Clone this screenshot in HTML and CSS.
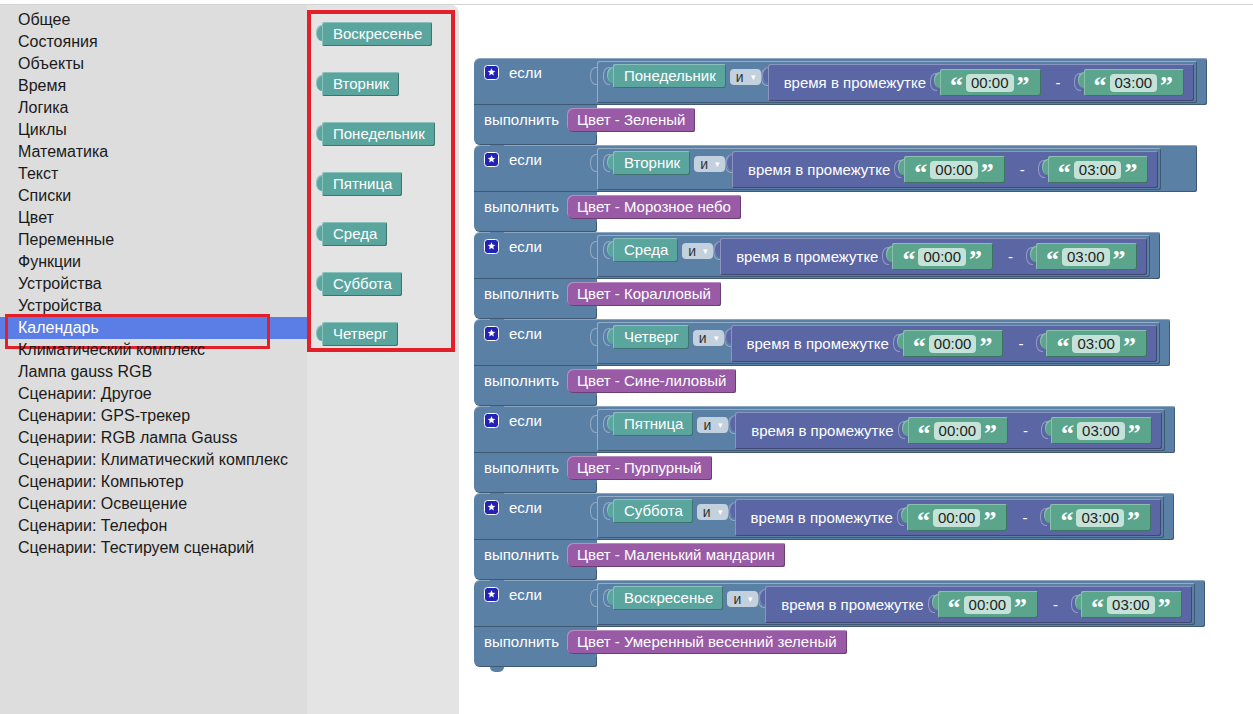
FILE: index.html
```html
<!DOCTYPE html>
<html>
<head>
  <meta charset="UTF-8">
  <title>Календарь - Blockly</title>
  <link rel="stylesheet" href="styles.css">
</head>
<body>
  <div class="app">
    <div class="toolbox">
      <div class="cat">Общее</div>
      <div class="cat">Состояния</div>
      <div class="cat">Объекты</div>
      <div class="cat">Время</div>
      <div class="cat">Логика</div>
      <div class="cat">Циклы</div>
      <div class="cat">Математика</div>
      <div class="cat">Текст</div>
      <div class="cat">Списки</div>
      <div class="cat">Цвет</div>
      <div class="cat">Переменные</div>
      <div class="cat">Функции</div>
      <div class="cat">Устройства</div>
      <div class="cat">Устройства</div>
      <div class="cat selected">Календарь</div>
      <div class="cat">Климатический комплекс</div>
      <div class="cat">Лампа gauss RGB</div>
      <div class="cat">Сценарии: Другое</div>
      <div class="cat">Сценарии: GPS-трекер</div>
      <div class="cat">Сценарии: RGB лампа Gauss</div>
      <div class="cat">Сценарии: Климатический комплекс</div>
      <div class="cat">Сценарии: Компьютер</div>
      <div class="cat">Сценарии: Освещение</div>
      <div class="cat">Сценарии: Телефон</div>
      <div class="cat">Сценарии: Тестируем сценарий</div>
    </div>

    <div class="flyout">
      <div class="flyout-list">
        <div class="day-block">Воскресенье</div>
        <div class="day-block">Вторник</div>
        <div class="day-block">Понедельник</div>
        <div class="day-block">Пятница</div>
        <div class="day-block">Среда</div>
        <div class="day-block">Суббота</div>
        <div class="day-block">Четверг</div>
      </div>
    </div>

    <div class="workspace" id="workspace"></div>
  </div>

  <script>
    // calendar rules: day of week + colour to apply from 00:00 to 03:00
    const rules = [
      ['Понедельник', 'Цвет - Зеленый'],
      ['Вторник', 'Цвет - Морозное небо', 'wide'],
      ['Среда', 'Цвет - Коралловый'],
      ['Четверг', 'Цвет - Сине-лиловый'],
      ['Пятница', 'Цвет - Пурпурный'],
      ['Суббота', 'Цвет - Маленький мандарин'],
      ['Воскресенье', 'Цвет - Умеренный весенний зеленый']
    ];
    const star = '<svg class="star" width="15" height="15" viewBox="0 0 15 15">' +
      '<rect x="0.5" y="0.5" width="14" height="14" rx="3" fill="#2222b4" stroke="#fff"/>' +
      '<path d="M7.5 3.3l1.1 2.5 2.7.2-2.1 1.8.7 2.6-2.4-1.4-2.4 1.4.7-2.6-2.1-1.8 2.7-.2z" fill="#fff"/></svg>';
    const textBlock = (t) =>
      '<div class="slot"><div class="text-block"><span class="q">\u201C</span>' +
      '<span class="field">' + t + '</span><span class="q">\u201D</span></div></div>';

    const ws = document.getElementById('workspace');
    rules.forEach(([day, colour, mod]) => {
      const el = document.createElement('div');
      el.className = 'if-block' + (mod ? ' ' + mod : '');
      el.innerHTML =
        '<div class="if-head">' +
          '<div class="if-label">' + star + '<span>если</span></div>' +
          '<div class="slot head-slot"><div class="and-block">' +
            '<div class="slot day-slot"><div class="day-block">' + day + '</div></div>' +
            '<div class="dropdown">и<span class="arrow">\u25BE</span></div>' +
            '<div class="slot range-slot"><div class="range-block">' +
              '<span class="range-label">время в промежутке</span>' +
              textBlock('00:00') + '<span class="dash">-</span>' + textBlock('03:00') +
            '</div></div>' +
          '</div></div>' +
        '</div>' +
        '<div class="if-body">' +
          '<div class="do-label">выполнить</div>' +
          '<div class="color-block">' + colour + '</div>' +
        '</div>' +
        '<div class="if-foot"></div>';
      ws.appendChild(el);
    });
  </script>
</body>
</html>
```

FILE: styles.css
```css
* {
  box-sizing: border-box;
}
html, body {
  margin: 0;
  padding: 0;
  height: 100%;
}
body {
  font-family: "Liberation Sans", Arial, sans-serif;
  background: #fff;
  overflow: hidden;
}
.app {
  display: flex;
  margin-top: 4px;
  border-top: 1px solid #d4d4d4;
  height: calc(100% - 4px);
}

/* category list */
.toolbox {
  width: 307px;
  flex-shrink: 0;
  background: #dddddd;
  padding-top: 4px;
}
.cat {
  position: relative;
  height: 22px;
  line-height: 22px;
  padding-left: 18px;
  font-size: 16px;
  color: #1a1a1a;
  white-space: nowrap;
}
.cat.selected {
  background: #5a7ee6;
  color: #fff;
}
.cat.selected::after {
  content: "";
  position: absolute;
  left: 5px;
  top: -3px;
  width: 259px;
  height: 29px;
  border: 3px solid #e3202a;
}

/* flyout with day blocks */
.flyout {
  width: 152px;
  flex-shrink: 0;
  background: #e4e4e4;
  border-top-right-radius: 8px;
}
.flyout-list {
  margin: 5px 4px 0 0;
  border: 4px solid #e3202a;
  padding: 8px 0 2px 11px;
  display: flex;
  flex-direction: column;
  align-items: flex-start;
  gap: 26px;
}

/* blocks */
.day-block,
.text-block,
.range-block {
  position: relative;
}
.day-block::before,
.text-block::before,
.range-block::before {
  content: "";
  position: absolute;
  left: -6px;
  top: 3px;
  width: 6px;
  height: 16px;
  background: inherit;
  border-radius: 6px 0 0 6px / 8px 0 0 8px;
  box-shadow: inset 1px 1px 0 rgba(255, 255, 255, 0.3);
}
.day-block {
  height: 24px;
  line-height: 24px;
  padding: 0 10px 0 11px;
  font-size: 15px;
  color: #fff;
  background: #5ba59f;
  border-radius: 2px;
  box-shadow: inset 1px 1px 0 rgba(255, 255, 255, 0.3), inset -1px -1px 0 rgba(0, 0, 0, 0.3);
  white-space: nowrap;
}

.workspace {
  flex: 1;
  padding: 53px 0 0 15px;
  display: flex;
  flex-direction: column;
  align-items: flex-start;
}
.if-block {
  display: flex;
  flex-direction: column;
  align-items: flex-start;
  color: #fff;
  font-size: 15px;
}
.if-head {
  display: flex;
  align-items: flex-start;
  height: 47px;
  padding: 3px 10px 0 0;
  background: #5b80a5;
  border-radius: 6px 2px 2px 0;
  box-shadow: inset 0 1px 0 rgba(255, 255, 255, 0.3), inset -1px -1px 0 rgba(0, 0, 0, 0.3);
}
.if-block.wide .if-head {
  padding-right: 36px;
}
.if-label {
  width: 116px;
  display: flex;
  align-items: center;
  gap: 10px;
  padding: 3px 0 0 10px;
}
.star {
  display: block;
}

.slot {
  position: relative;
  padding-left: 10px;
}
.slot::before {
  content: "";
  position: absolute;
  left: 0;
  top: 4px;
  width: 6px;
  height: 16px;
  border: 1px solid rgba(255, 255, 255, 0.35);
  border-right: 0;
  border-radius: 6px 0 0 6px / 8px 0 0 8px;
}
.head-slot {
  padding-left: 7px;
}
.head-slot::before {
  top: 6px;
}
.and-block {
  display: flex;
  align-items: flex-start;
  height: 42px;
  padding: 3px 3px 2px 6px;
  background: #5b80a5;
  border-radius: 2px;
  box-shadow: inset 1px 1px 0 rgba(255, 255, 255, 0.35), inset -1px -1px 0 rgba(0, 0, 0, 0.3);
}
.day-slot::before {
  top: 3px;
}
.dropdown {
  display: flex;
  align-items: center;
  height: 16px;
  margin: 5px 0 0 4px;
  padding: 0 5px 0 6px;
  background: #c3d0dd;
  color: #333;
  font-size: 14px;
  border-radius: 4px;
}
.arrow {
  font-size: 9px;
  color: #fff;
  margin-left: 7px;
}
.range-slot {
  padding-left: 7px;
}
.range-block {
  display: flex;
  align-items: center;
  height: 37px;
  padding: 0 10px 0 16px;
  background: #5b67a5;
  border-radius: 2px;
  box-shadow: inset 1px 1px 0 rgba(255, 255, 255, 0.3), inset -1px -1px 0 rgba(0, 0, 0, 0.3);
  white-space: nowrap;
}
.range-block .slot {
  margin-left: 4px;
}
.range-block .slot::before {
  top: 4px;
}
.text-block {
  display: flex;
  align-items: center;
  gap: 3px;
  height: 27px;
  padding: 0 11px 0 10px;
  background: #5ba58c;
  border-radius: 2px;
  box-shadow: inset 1px 1px 0 rgba(255, 255, 255, 0.3), inset -1px -1px 0 rgba(0, 0, 0, 0.3);
}
.q {
  font-family: "Liberation Serif", serif;
  font-weight: bold;
  font-size: 26px;
  line-height: 1;
  height: 18px;
  margin-top: -1px;
  color: #fff;
}
.field {
  height: 18px;
  line-height: 18px;
  padding: 0 5px;
  background: #c4e2d7;
  color: #222;
  border-radius: 4px;
}
.dash {
  margin: 0 9px 0 15px;
}

.if-body {
  display: flex;
  height: 30px;
}
.do-label {
  width: 123px;
  padding-left: 10px;
  line-height: 30px;
  background: #5b80a5;
}
.color-block {
  margin: 3px 0 0 -30px;
  height: 24px;
  line-height: 24px;
  padding: 0 10px;
  background: #995ba5;
  border-radius: 6px 2px 2px 6px;
  box-shadow: inset 1px 1px 0 rgba(255, 255, 255, 0.3), inset -1px -1px 0 rgba(0, 0, 0, 0.3);
  white-space: nowrap;
}
.if-foot {
  position: relative;
  width: 123px;
  height: 10px;
  background: #5b80a5;
  border-radius: 0 0 2px 6px;
  box-shadow: inset -1px -1px 0 rgba(0, 0, 0, 0.3);
}
.if-foot::after {
  content: "";
  position: absolute;
  left: 16px;
  bottom: -5px;
  width: 14px;
  height: 5px;
  background: #5b80a5;
  border-radius: 0 0 5px 5px;
}
```
